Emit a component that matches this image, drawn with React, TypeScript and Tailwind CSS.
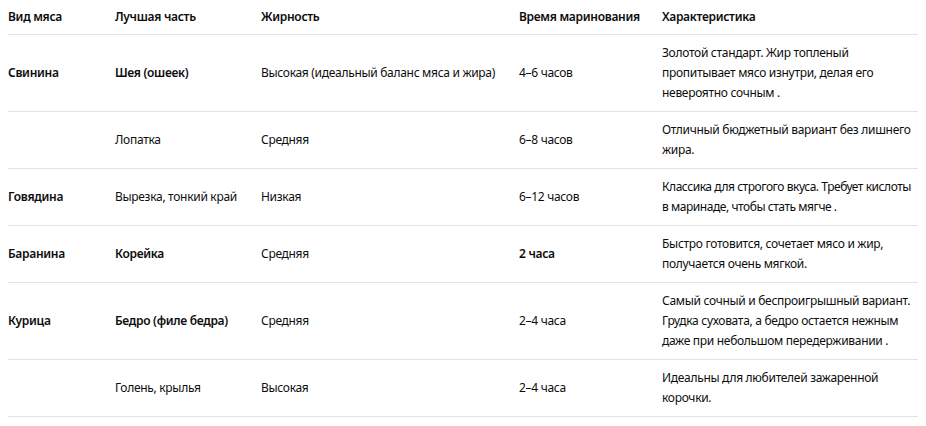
import React from "react";

type Row = {
  meat: string;
  meatBold?: boolean;
  part: string;
  partBold?: boolean;
  fat: string;
  time: string;
  timeBold?: boolean;
  desc: string;
  tight?: boolean;
};

const rows: Row[] = [
  {
    meat: "Свинина",
    meatBold: true,
    part: "Шея (ошеек)",
    partBold: true,
    fat: "Высокая (идеальный баланс мяса и жира)",
    time: "4–6 часов",
    desc: "Золотой стандарт. Жир топленый пропитывает мясо изнутри, делая его невероятно сочным .",
  },
  {
    meat: "",
    part: "Лопатка",
    fat: "Средняя",
    time: "6–8 часов",
    desc: "Отличный бюджетный вариант без лишнего жира.",
  },
  {
    meat: "Говядина",
    meatBold: true,
    part: "Вырезка, тонкий край",
    fat: "Низкая",
    time: "6–12 часов",
    desc: "Классика для строгого вкуса. Требует кислоты в маринаде, чтобы стать мягче .",
    tight: true,
  },
  {
    meat: "Баранина",
    meatBold: true,
    part: "Корейка",
    partBold: true,
    fat: "Средняя",
    time: "2 часа",
    timeBold: true,
    desc: "Быстро готовится, сочетает мясо и жир, получается очень мягкой.",
  },
  {
    meat: "Курица",
    meatBold: true,
    part: "Бедро (филе бедра)",
    partBold: true,
    fat: "Средняя",
    time: "2–4 часа",
    desc: "Самый сочный и беспроигрышный вариант. Грудка суховата, а бедро остается нежным даже при небольшом передерживании .",
  },
  {
    meat: "",
    part: "Голень, крылья",
    fat: "Высокая",
    time: "2–4 часа",
    desc: "Идеальны для любителей зажаренной корочки.",
  },
];

const headers = ["Вид мяса", "Лучшая часть", "Жирность", "Время маринования", "Характеристика"];

export default function App() {
  return (
    <div
      className="w-[926px] h-[426px] bg-white px-2 text-[12px] leading-[20px] tracking-[-0.3px] text-[#0d0d0d]"
      style={{ fontFamily: '"Noto Sans", "Open Sans", sans-serif' }}
    >
      <table className="w-[910px] table-fixed border-collapse">
        <colgroup>
          <col className="w-[107px]" />
          <col className="w-[146px]" />
          <col className="w-[258px]" />
          <col className="w-[143px]" />
          <col className="w-[256px]" />
        </colgroup>
        <thead>
          <tr className="border-b border-[#e3e3e3]">
            {headers.map((h) => (
              <th key={h} className="py-[7px] pr-2 text-left font-semibold align-middle last:pr-1">
                {h}
              </th>
            ))}
          </tr>
        </thead>
        <tbody>
          {rows.map((r, i) => (
            <tr key={i} className="border-b border-[#e3e3e3]">
              <td className={`py-2 pr-2 align-middle ${r.meatBold ? "font-semibold" : ""}`}>{r.meat}</td>
              <td className={`py-2 pr-2 align-middle ${r.partBold ? "font-semibold" : ""}`}>{r.part}</td>
              <td className="py-2 pr-2 align-middle">{r.fat}</td>
              <td className={`py-2 pr-2 align-middle ${r.timeBold ? "font-semibold" : ""}`}>{r.time}</td>
              <td className={`py-2 align-middle ${r.tight ? "pr-0 tracking-[-0.45px]" : "pr-1"}`}>{r.desc}</td>
            </tr>
          ))}
        </tbody>
      </table>
    </div>
  );
}
